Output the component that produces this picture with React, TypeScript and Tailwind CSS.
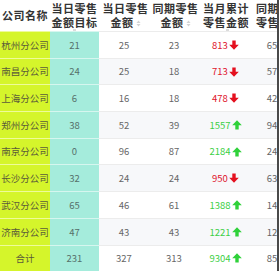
import React from 'react';

type Row = { name: string; target: string; today: string; last: string; month: string; up: boolean; prev: string };

const rows: Row[] = [
  { name: '杭州分公司', target: '21', today: '25', last: '23', month: '813', up: false, prev: '65' },
  { name: '南昌分公司', target: '24', today: '25', last: '18', month: '713', up: false, prev: '57' },
  { name: '上海分公司', target: '6', today: '16', last: '18', month: '478', up: false, prev: '42' },
  { name: '郑州分公司', target: '38', today: '52', last: '39', month: '1557', up: true, prev: '94' },
  { name: '南京分公司', target: '0', today: '96', last: '87', month: '2184', up: true, prev: '24' },
  { name: '长沙分公司', target: '32', today: '24', last: '24', month: '950', up: false, prev: '63' },
  { name: '武汉分公司', target: '65', today: '46', last: '61', month: '1388', up: true, prev: '14' },
  { name: '济南分公司', target: '47', today: '43', last: '43', month: '1221', up: true, prev: '12' },
  { name: '合计', target: '231', today: '327', last: '313', month: '9304', up: true, prev: '85' },
];

function Arrow({ up }: { up: boolean }) {
  return (
    <svg width="10" height="10" viewBox="0 0 10 10" className="ml-[1px] shrink-0">
      {up ? (
        <path d="M5 0.3 L9.8 5.2 L6.7 5.2 L6.7 9.6 L3.3 9.6 L3.3 5.2 L0.2 5.2 Z" fill="#2fd13a" />
      ) : (
        <path d="M5 9.7 L9.8 4.8 L6.7 4.8 L6.7 0.4 L3.3 0.4 L3.3 4.8 L0.2 4.8 Z" fill="#e4101f" />
      )}
    </svg>
  );
}

function Sort() {
  return (
    <svg width="5" height="7" viewBox="0 0 5 7" className="ml-[2px] mt-[4px]">
      <path d="M2.5 0.5 L4.5 3 L0.5 3 Z" fill="#d4d4d4" />
      <path d="M2.5 6.5 L4.5 4 L0.5 4 Z" fill="#d4d4d4" />
    </svg>
  );
}

export default function App() {
  const font = { fontFamily: '"Noto Sans CJK SC", "Noto Sans", sans-serif' };
  return (
    <div className="relative h-[271px] w-[279px] overflow-hidden bg-white" style={font}>
      <div className="w-[320px]">
        <div className="flex h-[31px] whitespace-nowrap text-[11px] font-bold leading-[13.5px] tracking-[0.5px] text-[#333]">
          <div className="flex w-[50px] items-center justify-center">公司名称</div>
          <div className="relative flex w-[49px] flex-col items-center justify-center">
            <span>当日零售</span>
            <span>金额目标</span>
            <span className="absolute bottom-0 left-[23px] h-[2px] w-[3px] bg-[#dcdcdc]" />
          </div>
          <div className="flex w-[50px] flex-col items-center justify-center pl-[3px]">
            <span>当日零售</span>
            <span className="flex">金额<Sort /></span>
          </div>
          <div className="flex w-[50px] flex-col items-center justify-center pl-[3px]">
            <span>同期零售</span>
            <span className="flex">金额<Sort /></span>
          </div>
          <div className="relative flex w-[51px] flex-col items-center justify-center pl-[3px]">
            <span>当月累计</span>
            <span>零售金额</span>
            <span className="absolute bottom-0 left-[27px] h-[2px] w-[3px] bg-[#dcdcdc]" />
          </div>
          <div className="flex w-[50px] flex-col items-center justify-center pl-[8px]">
            <span>同期零售</span>
            <span>零售金额</span>
          </div>
        </div>
        {rows.map((r, i) => (
          <div
            key={r.name}
            className={`flex h-[26.7px] text-[9.5px] text-[#666] ${i % 2 === 1 ? 'bg-[#f7f8fa]' : 'bg-white'}`}
          >
            <div className="flex w-[50px] items-center justify-center border-t border-[#eefb9a] bg-[#d5f52b] text-[#5a5a3a]">
              {r.name}
            </div>
            <div className="flex w-[49px] items-center justify-center border-t border-[#d6f6ef] bg-[#a5ecdc] text-[#55706a]">
              {r.target}
            </div>
            <div className="flex w-[50px] items-center justify-center border-t border-[#ececec]">{r.today}</div>
            <div className="flex w-[50px] items-center justify-center border-t border-[#ececec]">{r.last}</div>
            <div className="flex w-[51px] items-center justify-center border-t border-[#ececec] pl-[2px]">
              <span className={r.up ? 'text-[#3ccf45]' : 'text-[#e0132b]'}>{r.month}</span>
              <Arrow up={r.up} />
            </div>
            <div className="flex w-[44px] items-center justify-center border-t border-[#ececec]">{r.prev}</div>
          </div>
        ))}
      </div>
      <div className="absolute right-0 top-0 h-full w-[2px] bg-[#4a4a4a]" />
    </div>
  );
}
